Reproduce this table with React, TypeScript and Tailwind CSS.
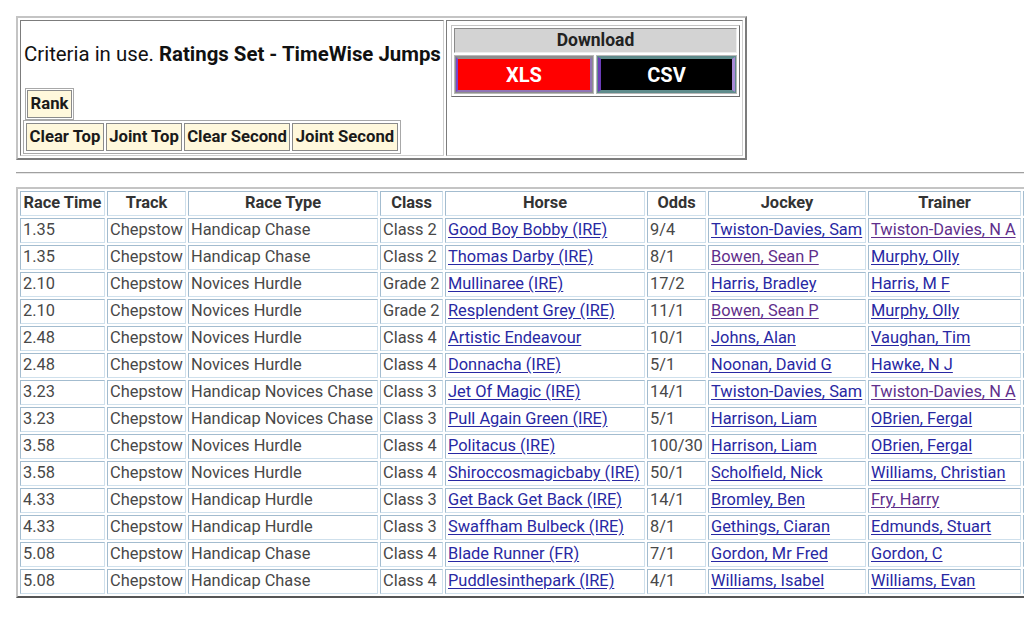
import React from "react";

type Row = {
  time: string;
  type: string;
  cls: string;
  horse: string;
  odds: string;
  jockey: string;
  jv?: boolean;
  trainer: string;
  tv?: boolean;
};

const rows: Row[] = [
  { time: "1.35", type: "Handicap Chase", cls: "Class 2", horse: "Good Boy Bobby (IRE)", odds: "9/4", jockey: "Twiston-Davies, Sam", trainer: "Twiston-Davies, N A", tv: true },
  { time: "1.35", type: "Handicap Chase", cls: "Class 2", horse: "Thomas Darby (IRE)", odds: "8/1", jockey: "Bowen, Sean P", jv: true, trainer: "Murphy, Olly" },
  { time: "2.10", type: "Novices Hurdle", cls: "Grade 2", horse: "Mullinaree (IRE)", odds: "17/2", jockey: "Harris, Bradley", trainer: "Harris, M F" },
  { time: "2.10", type: "Novices Hurdle", cls: "Grade 2", horse: "Resplendent Grey (IRE)", odds: "11/1", jockey: "Bowen, Sean P", jv: true, trainer: "Murphy, Olly" },
  { time: "2.48", type: "Novices Hurdle", cls: "Class 4", horse: "Artistic Endeavour", odds: "10/1", jockey: "Johns, Alan", trainer: "Vaughan, Tim" },
  { time: "2.48", type: "Novices Hurdle", cls: "Class 4", horse: "Donnacha (IRE)", odds: "5/1", jockey: "Noonan, David G", trainer: "Hawke, N J" },
  { time: "3.23", type: "Handicap Novices Chase", cls: "Class 3", horse: "Jet Of Magic (IRE)", odds: "14/1", jockey: "Twiston-Davies, Sam", trainer: "Twiston-Davies, N A", tv: true },
  { time: "3.23", type: "Handicap Novices Chase", cls: "Class 3", horse: "Pull Again Green (IRE)", odds: "5/1", jockey: "Harrison, Liam", trainer: "OBrien, Fergal" },
  { time: "3.58", type: "Novices Hurdle", cls: "Class 4", horse: "Politacus (IRE)", odds: "100/30", jockey: "Harrison, Liam", trainer: "OBrien, Fergal" },
  { time: "3.58", type: "Novices Hurdle", cls: "Class 4", horse: "Shiroccosmagicbaby (IRE)", odds: "50/1", jockey: "Scholfield, Nick", trainer: "Williams, Christian" },
  { time: "4.33", type: "Handicap Hurdle", cls: "Class 3", horse: "Get Back Get Back (IRE)", odds: "14/1", jockey: "Bromley, Ben", trainer: "Fry, Harry", tv: true },
  { time: "4.33", type: "Handicap Hurdle", cls: "Class 3", horse: "Swaffham Bulbeck (IRE)", odds: "8/1", jockey: "Gethings, Ciaran", trainer: "Edmunds, Stuart" },
  { time: "5.08", type: "Handicap Chase", cls: "Class 4", horse: "Blade Runner (FR)", odds: "7/1", jockey: "Gordon, Mr Fred", trainer: "Gordon, C" },
  { time: "5.08", type: "Handicap Chase", cls: "Class 4", horse: "Puddlesinthepark (IRE)", odds: "4/1", jockey: "Williams, Isabel", trainer: "Williams, Evan" },
];

const headers = ["Race Time", "Track", "Race Type", "Class", "Horse", "Odds", "Jockey", "Trainer", ""];

const cellBase =
  "h-[25px] border border-t-[#a3bccf] border-l-[#a3bccf] border-r-[#cfe0ec] border-b-[#cfe0ec] px-[2px] leading-[22px] whitespace-nowrap overflow-hidden";

function Cell({ children }: { children?: React.ReactNode }) {
  return <div className={`${cellBase} text-[#484848]`}>{children}</div>;
}

function LinkCell({ text, visited }: { text: string; visited?: boolean }) {
  return (
    <div className={cellBase}>
      <a
        href="#"
        className={
          visited
            ? "text-[#5f2f8c] underline decoration-[#5f2f8c] underline-offset-[2px]"
            : "text-[#2828a3] underline decoration-[#2828a3] underline-offset-[2px]"
        }
      >
        {text}
      </a>
    </div>
  );
}

function RankBtn({ label, w }: { label: string; w: string }) {
  return (
    <div
      className={`${w} h-[28px] bg-[#fff8dc] border border-[#8a8a8a] flex items-center justify-center font-bold text-[16.7px] text-[#1a1a1a] leading-none whitespace-nowrap`}
    >
      {label}
    </div>
  );
}

export default function App() {
  return (
    <div className="w-[1024px] h-[619px] overflow-hidden bg-white pt-[16px] pl-[16px] font-['Roboto',sans-serif]">
      {/* Top criteria table */}
      <div className="flex w-[731px] h-[144px] border-2 border-t-[#c4c4c4] border-l-[#c4c4c4] border-r-[#7c7c7c] border-b-[#7c7c7c] p-[2px] gap-[2px]">
        <div className="w-[424px] h-[136px] border border-t-[#7c7c7c] border-l-[#7c7c7c] border-r-[#cfcfcf] border-b-[#cfcfcf] flex flex-col">
          <div className="mt-[21px] ml-[3px] text-[20.4px] leading-[24px] text-[#111] whitespace-nowrap">
            Criteria in use. <span className="font-bold">Ratings Set - TimeWise Jumps</span>
          </div>
          <div className="mt-[22px] ml-[4px] w-max border border-[#a8a8a8] p-[1px]">
            <RankBtn label="Rank" w="w-[45px]" />
          </div>
          <div className="ml-[2px] w-max border border-[#a8a8a8] p-[2px] flex gap-[2px]">
            <RankBtn label="Clear Top" w="w-[78px]" />
            <RankBtn label="Joint Top" w="w-[76px]" />
            <RankBtn label="Clear Second" w="w-[106px]" />
            <RankBtn label="Joint Second" w="w-[106px]" />
          </div>
        </div>
        <div className="w-[297px] h-[136px] border border-t-[#7c7c7c] border-l-[#7c7c7c] border-r-[#cfcfcf] border-b-[#cfcfcf] pt-[4px] pl-[4px]">
          <div className="w-[289px] border border-t-[#c4c4c4] border-l-[#c4c4c4] border-r-[#6c6c6c] border-b-[#6c6c6c] p-[2px] flex flex-col gap-[2px]">
            <div className="h-[25px] bg-[#d3d3d3] border border-t-[#8a8a8a] border-l-[#8a8a8a] border-r-[#eeeeee] border-b-[#eeeeee] flex items-center justify-center font-bold text-[17.5px] text-[#222]">
              Download
            </div>
            <div className="flex gap-[2px]">
              <div className="w-[140px] h-[39px] border border-[#b8b8b8] bg-[#8e8e8e] p-[1px]">
                <div className="h-full border-2 border-t-[#8e8e8e] border-l-[#7a48c8] border-r-[#8f74b4] border-b-[#8f74b4] bg-[#ff0000] flex items-center justify-center text-white font-bold text-[20px]">
                  XLS
                </div>
              </div>
              <div className="w-[141px] h-[39px] border border-[#b8b8b8] bg-[#5f8c8c] p-[1px]">
                <div className="h-full border-y-2 border-l-[3px] border-r-[3px] border-y-[#5f8c8c] border-l-[#6a3cb8] border-r-[#a88ad6] bg-black flex items-center justify-center text-white font-bold text-[20px]">
                  CSV
                </div>
              </div>
            </div>
          </div>
        </div>
      </div>

      {/* hr */}
      <div className="mt-[12px] border-t border-t-[#a0a0a0] border-b border-b-[#e6e6e6]" />

      {/* Data table */}
      <div className="mt-[13px] w-max grid grid-cols-[85px_79px_190px_63px_200px_59px_158px_153px_90px] gap-[2px] p-[2px] border-2 border-t-[#c4c4c4] border-l-[#c4c4c4] border-r-[#555] border-b-[#555] text-[16.4px]">
        {headers.map((h, i) => (
          <div key={i} className={`${cellBase} text-center font-bold text-[#333]`}>
            {h}
          </div>
        ))}
        {rows.map((r, i) => (
          <React.Fragment key={i}>
            <Cell>{r.time}</Cell>
            <Cell>Chepstow</Cell>
            <Cell>{r.type}</Cell>
            <Cell>{r.cls}</Cell>
            <LinkCell text={r.horse} />
            <Cell>{r.odds}</Cell>
            <LinkCell text={r.jockey} visited={r.jv} />
            <LinkCell text={r.trainer} visited={r.tv} />
            <Cell />
          </React.Fragment>
        ))}
      </div>
    </div>
  );
}
